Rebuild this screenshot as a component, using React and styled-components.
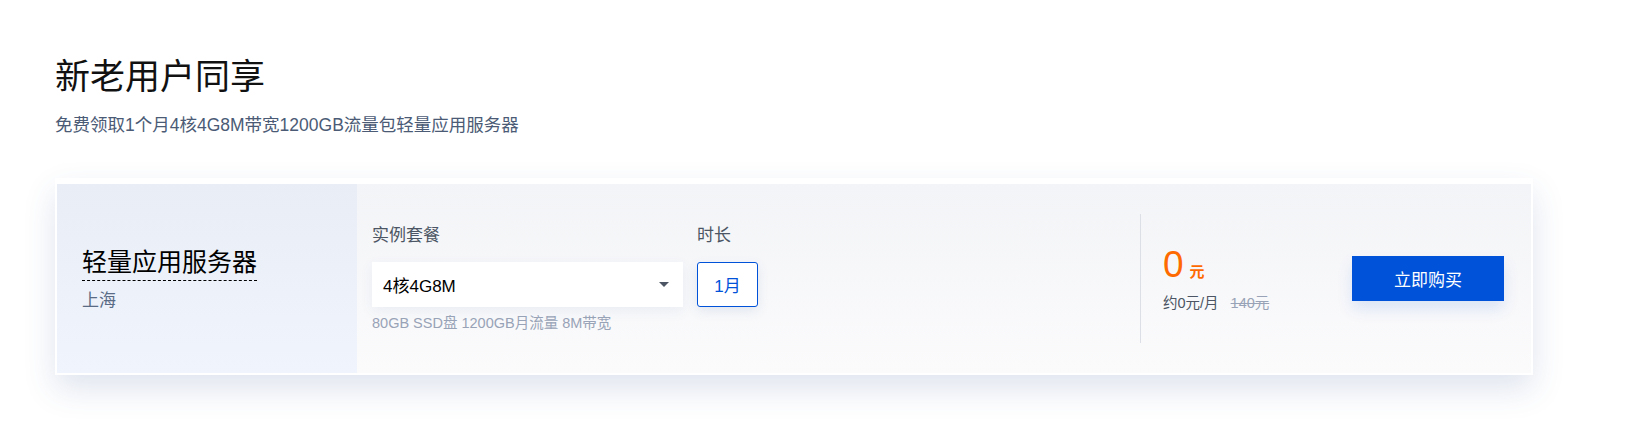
import React from 'react';
import styled, { createGlobalStyle } from 'styled-components';

const GlobalStyle = createGlobalStyle`
  body {
    margin: 0;
    background: #fff;
    font-family: "Liberation Sans", "Noto Sans CJK SC", sans-serif;
  }
`;

const Page = styled.section`
  padding: 54px 0 56px 55px;
`;

const Heading = styled.h2`
  margin: 0;
  font-size: 35px;
  font-weight: 400;
  line-height: 46px;
  color: #111;
`;

const SubTitle = styled.p`
  margin: 12px 0 0;
  font-size: 17.5px;
  line-height: 26px;
  color: #4b5b76;
`;

const Card = styled.div`
  margin-top: 40px;
  width: 1474px;
  padding: 6px 2px 2px 2px;
  background: #fff;
  display: flex;
  box-shadow: 0 14px 30px rgba(55, 90, 150, 0.16);
`;

const Region = styled.div`
  width: 300px;
  height: 189px;
  padding-left: 25px;
  box-sizing: border-box;
  display: flex;
  flex-direction: column;
  justify-content: center;
  background: linear-gradient(180deg, #e8edf6 0%, #f0f4fd 100%);
`;

const ProductName = styled.span`
  align-self: flex-start;
  font-size: 25px;
  line-height: 32px;
  color: #000;
  border-bottom: 1px dashed #000;
  padding-bottom: 2px;
`;

const City = styled.span`
  margin-top: 9px;
  font-size: 17px;
  line-height: 22px;
  color: #5a6b85;
`;

const Body = styled.div`
  flex: 1;
  display: flex;
  align-items: stretch;
  padding-left: 15px;
  background: linear-gradient(180deg, #f3f4f7 0%, #fbfbfc 100%);
`;

const Configs = styled.div`
  flex: 1;
  display: flex;
  gap: 14px;
  padding-top: 40px;
`;

const Field = styled.div`
  display: flex;
  flex-direction: column;
`;

const Label = styled.div`
  font-size: 17px;
  line-height: 24px;
  color: #4b5563;
  margin-bottom: 14px;
`;

const Select = styled.div`
  width: 311px;
  height: 45px;
  box-sizing: border-box;
  padding: 0 14px 0 11px;
  display: flex;
  align-items: center;
  justify-content: space-between;
  background: #fff;
  font-size: 17px;
  color: #000;
  box-shadow: 0 4px 12px rgba(60, 96, 160, 0.08);
`;

const Caret = styled.span`
  width: 0;
  height: 0;
  border-left: 5px solid transparent;
  border-right: 5px solid transparent;
  border-top: 5px solid #4b5563;
`;

const Hint = styled.div`
  margin-top: 6px;
  font-size: 14.5px;
  line-height: 20px;
  color: #98a3b7;
`;

const Option = styled.button`
  width: 61px;
  height: 45px;
  border: 1px solid ${p => (p.$active ? '#0052d9' : '#dcdfe6')};
  border-radius: 3px;
  background: #fff;
  color: ${p => (p.$active ? '#0052d9' : '#333')};
  font-family: inherit;
  font-size: 17px;
  cursor: pointer;
  box-shadow: 0 4px 12px rgba(60, 96, 160, 0.12);
`;

const Checkout = styled.div`
  width: 341px;
  margin: 30px 0;
  border-left: 1px solid #dcdfe6;
  padding: 0 27px 0 22px;
  display: flex;
  align-items: center;
  justify-content: space-between;
`;

const Price = styled.div`
  display: flex;
  flex-direction: column;
`;

const Amount = styled.div`
  color: #ff6a00;
  font-size: 37px;
  line-height: 40px;
  span {
    font-size: 15px;
    font-weight: 700;
    margin-left: 6px;
  }
`;

const Monthly = styled.div`
  margin-top: 1px;
  font-size: 14.5px;
  line-height: 20px;
  color: #4b5563;
  s {
    margin-left: 12px;
    color: #98a3b7;
  }
`;

const BuyButton = styled.button`
  width: 152px;
  height: 45px;
  border: 0;
  background: #0052d9;
  color: #fff;
  font-family: inherit;
  font-size: 17px;
  cursor: pointer;
  box-shadow: 0 8px 16px rgba(0, 82, 217, 0.12);
`;

export default function App() {
  return (
    <Page>
      <GlobalStyle />
      <Heading>新老用户同享</Heading>
      <SubTitle>免费领取1个月4核4G8M带宽1200GB流量包轻量应用服务器</SubTitle>
      <Card>
        <Region>
          <ProductName>轻量应用服务器</ProductName>
          <City>上海</City>
        </Region>
        <Body>
          <Configs>
            <Field>
              <Label>实例套餐</Label>
              <Select>
                4核4G8M
                <Caret />
              </Select>
              <Hint>80GB SSD盘 1200GB月流量 8M带宽</Hint>
            </Field>
            <Field>
              <Label>时长</Label>
              <Option $active>1月</Option>
            </Field>
          </Configs>
          <Checkout>
            <Price>
              <Amount>
                0<span>元</span>
              </Amount>
              <Monthly>
                约0元/月<s>140元</s>
              </Monthly>
            </Price>
            <BuyButton>立即购买</BuyButton>
          </Checkout>
        </Body>
      </Card>
    </Page>
  );
}
